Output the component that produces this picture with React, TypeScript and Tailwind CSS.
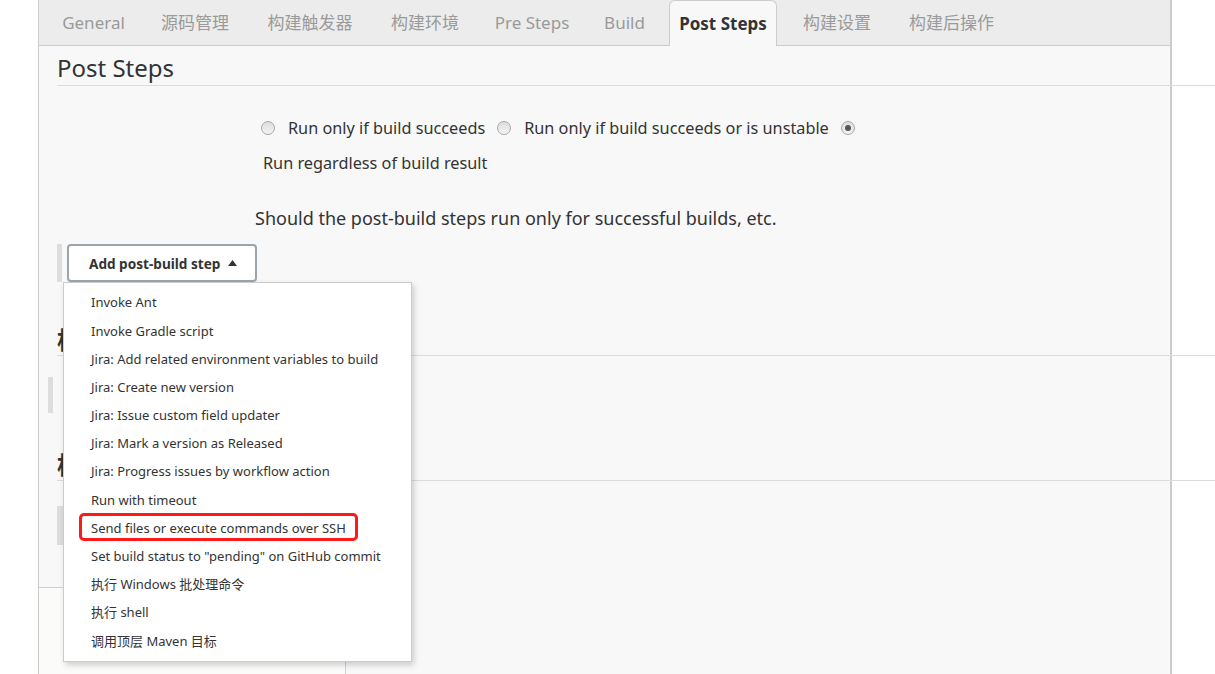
// Jenkins 任务配置页 — "Post Steps" 标签下，"Add post-build step" 下拉已展开。
// 下拉和底部保存栏是浮层，其余按文档流排。

const FONT = "font-['Noto_Sans','Noto_Sans_CJK_SC',sans-serif]";

type Tab = { label: string; w: string; active?: boolean };

const TABS: Tab[] = [
  { label: "General", w: "w-[97px]" },
  { label: "源码管理", w: "w-[106px]" },
  { label: "构建触发器", w: "w-[124px]" },
  { label: "构建环境", w: "w-[106px]" },
  { label: "Pre Steps", w: "w-[108px]" },
  { label: "Build", w: "w-[77px]" },
  { label: "Post Steps", w: "w-[108px]", active: true },
  { label: "构建设置", w: "w-[120px]" },
  { label: "构建后操作", w: "w-[109px]" },
];

const STEPS = [
  "Invoke Ant",
  "Invoke Gradle script",
  "Jira: Add related environment variables to build",
  "Jira: Create new version",
  "Jira: Issue custom field updater",
  "Jira: Mark a version as Released",
  "Jira: Progress issues by workflow action",
  "Run with timeout",
  "Send files or execute commands over SSH",
  'Set build status to "pending" on GitHub commit',
  "执行 Windows 批处理命令",
  "执行 shell",
  "调用顶层 Maven 目标",
];

function Radio({ checked = false }: { checked?: boolean }) {
  return (
    <span className="flex h-[14px] w-[14px] shrink-0 items-center justify-center rounded-full border border-[#a6a6a6] bg-gradient-to-b from-[#dcdcdc] to-[#f4f4f4]">
      {checked && <span className="h-[6px] w-[6px] rounded-full bg-[#555]" />}
    </span>
  );
}

function SectionTitle({ children }: { children: React.ReactNode }) {
  return (
    <div className="ml-[18px] w-[1158px] border-b border-[#dcdcdc]">
      <h2 className="h-[30px] text-[24px] font-semibold leading-[30px] text-[#333]">{children}</h2>
    </div>
  );
}

export default function App() {
  return (
    <div className={`relative h-[674px] w-[1215px] overflow-hidden bg-white text-[#333] ${FONT}`}>
      <div className="ml-[38px] h-full w-[1134px] border-l border-r-2 border-[#cccccc] bg-[#f8f8f8]">
        {/* tabs */}
        <div className="flex h-[46px] items-end border-b border-[#cccccc] bg-[#ececec] pl-[6px]">
          {TABS.map((t) =>
            t.active ? (
              <div
                key={t.label}
                className={`${t.w} relative -mb-px ml-[6px] flex h-[46px] items-center justify-center rounded-t-[6px] border border-b-0 border-[#cccccc] bg-[#f8f8f8] pt-[1px] text-[17px] font-bold text-[#333]`}
              >
                {t.label}
              </div>
            ) : (
              <div
                key={t.label}
                className={`${t.w} flex h-[45px] items-center justify-center pt-[1px] text-[17px] text-[#9a9a9a]`}
              >
                {t.label}
              </div>
            )
          )}
        </div>

        {/* Post Steps */}
        <div className="ml-[18px] w-[1158px] border-b border-[#dcdcdc] pt-[7px]">
          <h1 className="h-[32px] text-[24px] leading-[30px] text-[#333]">Post Steps</h1>
        </div>

        <div className="ml-[222px] mt-[30px] flex h-[24px] items-center text-[16.25px]">
          <Radio />
          <span className="ml-[13px]">Run only if build succeeds</span>
          <span className="ml-[12px]"><Radio /></span>
          <span className="ml-[13px]">Run only if build succeeds or is unstable</span>
          <span className="ml-[12px]"><Radio checked /></span>
        </div>
        <div className="ml-[224px] mt-[11px] h-[24px] text-[16.25px] leading-[24px]">Run regardless of build result</div>

        <p className="ml-[216px] mt-[30px] h-[26px] text-[18px] leading-[26px]">
          Should the post-build steps run only for successful builds, etc.
        </p>

        {/* add step button + open menu */}
        <div className="relative ml-[18px] mt-[13px] flex h-[38px] gap-[5px]">
          <span className="w-[5px] bg-[#dddddd]" />
          <button className="flex h-[38px] w-[190px] items-center gap-[8px] rounded-[4px] border-2 border-[#9ba5ae] bg-white pl-[20px] pt-[2px] text-[13.6px] font-bold text-[#333]">
            Add post-build step
            <svg width="9" height="6" viewBox="0 0 9 6" className="mt-[-2px]">
              <path d="M0 6 L4.5 0 L9 6 Z" fill="#333" />
            </svg>
          </button>

          <div className="absolute left-[6px] top-[38px] z-20 w-[349px] border border-[#cccccc] bg-white py-[6px] shadow-[2px_3px_6px_rgba(0,0,0,0.18)]">
            {STEPS.map((s) => (
              <div key={s} className="flex h-[28.2px] items-center pl-[27px] text-[13px] text-[#333]">
                {s}
              </div>
            ))}
            <span className="absolute left-[15px] top-[230px] h-[28px] w-[279px] rounded-[5px] border-[3px] border-[#ff1a1a]" />
          </div>
        </div>

        {/* sections hidden under the menu */}
        <div className="mt-[43px]">
          <SectionTitle>构建设置</SectionTitle>
        </div>
        <div className="ml-[9px] mt-[21px] h-[36px] w-[5px] bg-[#dddddd]" />
        <div className="mt-[37px]">
          <SectionTitle>构建后操作</SectionTitle>
        </div>
        <div className="ml-[18px] mt-[25px] h-[39px] w-[6px] bg-[#dddddd]" />
      </div>

      {/* sticky save bar */}
      <div className="absolute left-[39px] top-[587px] z-10 flex h-[90px] w-[307px] gap-[11px] border-r border-t border-[#c9d4c6] bg-[#fbfcfa] pl-[30px] pt-[20px]">
        <span className="h-[50px] w-[123px] rounded-[4px] border-2 border-[#8ea7bf] bg-[#e8eef4]" />
        <span className="h-[50px] w-[123px] rounded-[4px] border-2 border-[#c6c6c6] bg-[#f2f2f2]" />
      </div>
    </div>
  );
}
